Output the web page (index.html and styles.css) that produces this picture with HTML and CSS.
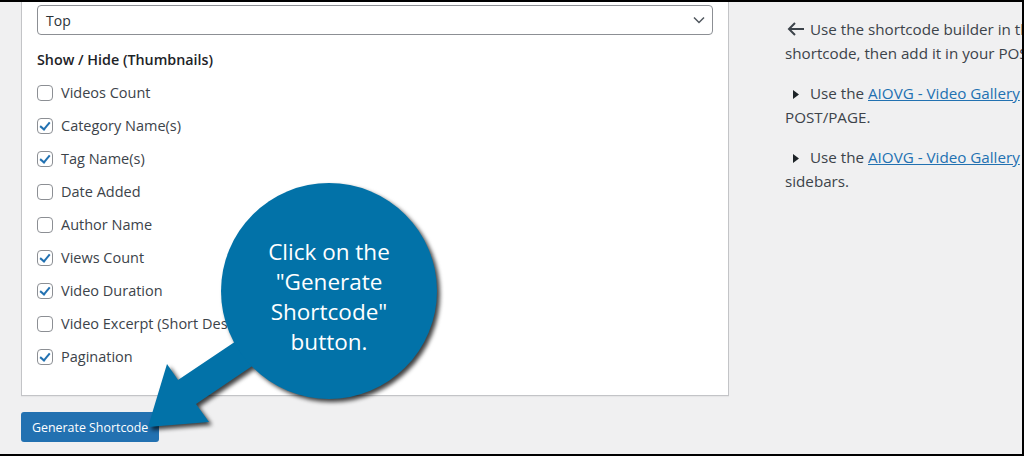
FILE: index.html
```html
<!DOCTYPE html>
<html lang="en">
<head>
    <meta charset="UTF-8">
    <meta name="viewport" content="width=device-width, initial-scale=1.0">
    <title>Video Gallery - Shortcode Builder</title>
    <link rel="stylesheet" href="styles.css">
</head>
<body>
    <div class="screen">
        <div class="builder">
            <div class="panel">
                <div class="select">
                    <span>Top</span>
                    <svg class="chevron" width="12" height="8" viewBox="0 0 12 8"><path d="M1 1.5l5 5 5-5" fill="none" stroke="#50575e" stroke-width="1.5"/></svg>
                </div>

                <h4>Show / Hide (Thumbnails)</h4>

                <ul class="options">
                    <li><span class="check"></span>Videos Count</li>
                    <li><span class="check on"></span>Category Name(s)</li>
                    <li><span class="check on"></span>Tag Name(s)</li>
                    <li><span class="check"></span>Date Added</li>
                    <li><span class="check"></span>Author Name</li>
                    <li><span class="check on"></span>Views Count</li>
                    <li><span class="check on"></span>Video Duration</li>
                    <li><span class="check"></span>Video Excerpt (Short Description)</li>
                    <li><span class="check on"></span>Pagination</li>
                </ul>
            </div>

            <button class="generate">Generate Shortcode</button>
        </div>

        <div class="help">
            <p>
                <span class="icon"><svg width="18" height="14" viewBox="0 0 18 14"><path d="M2 7h15M8 1L2 7l6 6" fill="none" stroke="#3c434a" stroke-width="2"/></svg></span>Use the shortcode builder in the left to build your<br>
                shortcode, then add it in your POST/PAGE.
            </p>
            <p>
                <span class="icon"><svg class="tri" width="6" height="9" viewBox="0 0 6 9"><path d="M0 0l6 4.5L0 9z" fill="#1d2327"/></svg></span>Use the <a href="#">AIOVG - Video Gallery</a> block to add the gallery in your<br>
                POST/PAGE.
            </p>
            <p>
                <span class="icon"><svg class="tri" width="6" height="9" viewBox="0 0 6 9"><path d="M0 0l6 4.5L0 9z" fill="#1d2327"/></svg></span>Use the <a href="#">AIOVG - Video Gallery</a> widget to add the gallery in your<br>
                sidebars.
            </p>
        </div>

        <!-- callout drawn over the page -->
        <svg class="callout" width="320" height="280" viewBox="140 172 320 280">
            <g class="bubble">
                <polygon points="148,427 167,364 178,380 290,305 310,327 196,404 209,422"/>
                <circle cx="329" cy="291" r="108"/>
            </g>
            <text x="329" y="260">Click on the</text>
            <text x="329" y="290">"Generate</text>
            <text x="329" y="320">Shortcode"</text>
            <text x="329" y="350">button.</text>
        </svg>
    </div>
</body>
</html>
```

FILE: styles.css
```css
body {
    margin: 0;
    font-family: "Open Sans", "Noto Sans", Arial, sans-serif;
    font-size: 14.5px;
    color: #3c434a;
}
.screen {
    position: relative;
    display: flex;
    width: 1024px;
    height: 456px;
    box-sizing: border-box;
    border-top: 2px solid #000;
    border-right: 2px solid #000;
    border-bottom: 2px solid #000;
    background-color: #f0f0f1;
    overflow: hidden;
}
.builder {
    flex: none;
    width: 708px;
    margin-left: 21px;
}
.panel {
    background-color: #fff;
    border: 1px solid #c3c4c7;
    border-top: none;
    box-shadow: 0 1px 1px rgba(0, 0, 0, 0.04);
    padding: 3px 15px 22px;
}
.select {
    display: flex;
    align-items: center;
    justify-content: space-between;
    height: 30px;
    box-sizing: border-box;
    border: 1px solid #8c8f94;
    border-radius: 4px;
    padding: 0 7px 0 8px;
    color: #2c3338;
    font-size: 14px;
}
h4 {
    margin: 15px 0 0;
    font-size: 14.3px;
    font-weight: 600;
    line-height: 20px;
    color: #1d2327;
}
.options {
    list-style: none;
    margin: 6px 0 0;
    padding: 0;
}
.options li {
    display: flex;
    align-items: center;
    height: 33px;
    white-space: nowrap;
    overflow: hidden;
}
.check {
    flex: none;
    width: 16px;
    height: 16px;
    box-sizing: border-box;
    border: 1px solid #8c8f94;
    border-radius: 4px;
    margin-right: 8px;
    background: #fff;
    position: relative;
}
.check.on::after {
    content: "";
    position: absolute;
    left: 4px;
    top: 1px;
    width: 4px;
    height: 8px;
    border-right: 2px solid #2271b1;
    border-bottom: 2px solid #2271b1;
    transform: rotate(40deg);
}
.generate {
    display: block;
    margin-top: 16px;
    height: 30px;
    padding: 0 11px;
    border: none;
    border-radius: 3px;
    background-color: #2271b1;
    color: #fff;
    font-family: inherit;
    font-size: 12.4px;
    cursor: pointer;
}
.help {
    flex: none;
    margin-left: 56px;
    padding-top: 16px;
    white-space: nowrap;
    font-size: 15.2px;
    line-height: 23.5px;
}
.help p {
    margin: 0 0 17px;
}
.help a {
    color: #2271b1;
}
.icon {
    display: inline-block;
    width: 25px;
}
.icon svg {
    vertical-align: -1px;
    margin-left: 2px;
}
.icon .tri {
    margin-left: 8px;
    vertical-align: 0;
}
.callout {
    position: absolute;
    left: 140px;
    top: 170px;
    overflow: visible;
}
.bubble {
    fill: #0272a8;
    filter: drop-shadow(3px 3px 2px rgba(0, 0, 0, 0.75));
}
.callout text {
    fill: #fff;
    font-family: "Open Sans", "Noto Sans", sans-serif;
    font-size: 22.5px;
    text-anchor: middle;
}
```
